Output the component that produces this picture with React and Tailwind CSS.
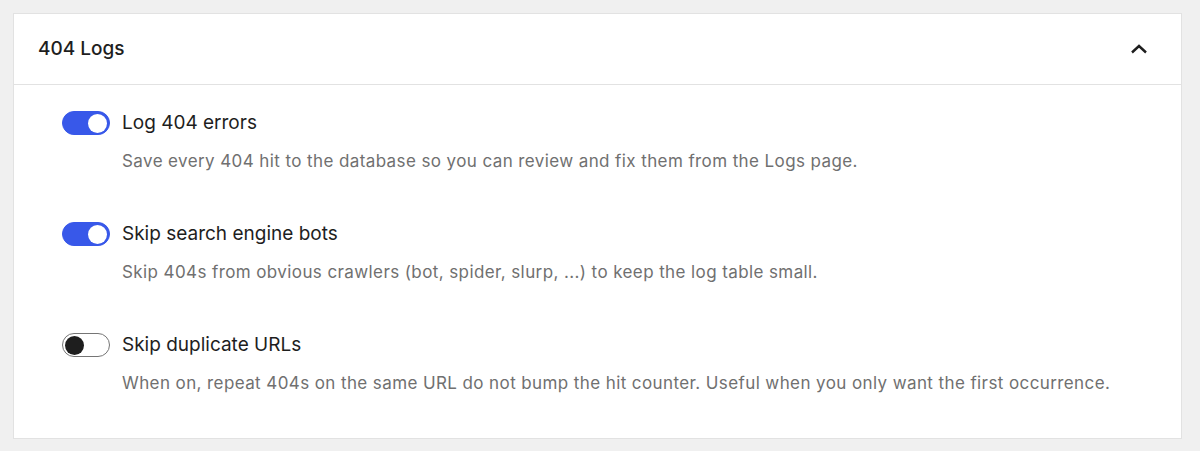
import React, { useState } from 'react'

const settings = [
    {
        id: 'log',
        label: 'Log 404 errors',
        help: 'Save every 404 hit to the database so you can review and fix them from the Logs page.',
        on: true,
    },
    {
        id: 'bots',
        label: 'Skip search engine bots',
        help: 'Skip 404s from obvious crawlers (bot, spider, slurp, ...) to keep the log table small.',
        on: true,
    },
    {
        id: 'dupes',
        label: 'Skip duplicate URLs',
        help: 'When on, repeat 404s on the same URL do not bump the hit counter. Useful when you only want the first occurrence.',
        on: false,
    },
]

const Toggle = ({ checked, onChange }) => (
    <button
        type="button"
        role="switch"
        aria-checked={checked}
        onClick={onChange}
        className={`flex items-center w-[48px] h-[24px] shrink-0 rounded-full box-border border px-[2px] ${
            checked
                ? 'justify-end bg-[#3858e9] border-[#3858e9]'
                : 'justify-start bg-white border-[#757575]'
        }`}
    >
        <span className={`w-[19px] h-[19px] rounded-full ${checked ? 'bg-white' : 'bg-[#1e1e1e]'}`} />
    </button>
)

const SettingRow = ({ item, onToggle }) => (
    <div className="flex flex-col gap-[14px]">
        <div className="flex items-center gap-[12px] h-[24px]">
            <Toggle checked={item.on} onChange={onToggle} />
            <span className="text-[19px] leading-[26px] text-[#1e1e1e]">{item.label}</span>
        </div>
        <p className="pl-[60px] text-[17px] tracking-[0.4px] leading-[24px] text-[#707070]">{item.help}</p>
    </div>
)

export default function App() {
    const [items, setItems] = useState(settings)
    const [open, setOpen] = useState(true)

    const flip = (id) =>
        setItems((prev) => prev.map((s) => (s.id === id ? { ...s, on: !s.on } : s)))

    return (
        <div
            className="min-h-[451px] bg-[#f0f0f0] pt-[13px] pl-[13px] pr-[18px] pb-[12px]"
            style={{ fontFamily: 'Inter, "Noto Sans", sans-serif' }}
        >
            <div className="bg-white border border-[#e2e2e2]">
                <button
                    type="button"
                    onClick={() => setOpen(!open)}
                    className="w-full h-[71px] flex items-center justify-between pl-[24px] pr-[33px] border-b border-[#e2e2e2]"
                >
                    <span className="text-[19px] font-medium text-[#1e1e1e]">404 Logs</span>
                    <svg width="18" height="10" viewBox="0 0 18 10" fill="none">
                        <path d="M2 8.5 L9 2 L16 8.5" stroke="#1e1e1e" strokeWidth="2.4" />
                    </svg>
                </button>
                {open && (
                    <div className="pt-[26px] pb-[43px] pl-[48px] pr-[24px] flex flex-col gap-[49px]">
                        {items.map((item) => (
                            <SettingRow key={item.id} item={item} onToggle={() => flip(item.id)} />
                        ))}
                    </div>
                )}
            </div>
        </div>
    )
}
